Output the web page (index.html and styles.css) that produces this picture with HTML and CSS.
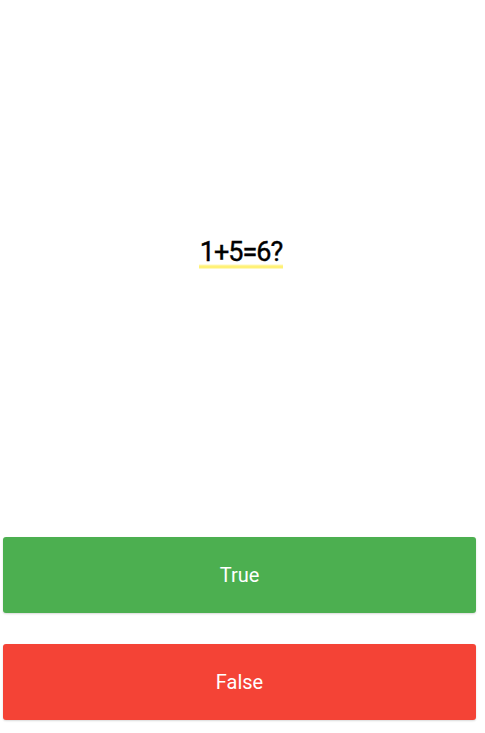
FILE: index.html
```html
<!DOCTYPE html>
<html>
<head>
<meta charset="utf-8">
<link rel="stylesheet" href="styles.css">
</head>
<body>
<div class="app">
  <div class="question"><span class="q-text">1+5=6?</span></div>
  <div class="answers">
    <button class="btn btn-true">True</button>
    <button class="btn btn-false">False</button>
  </div>
</div>
</body>
</html>
```
FILE: styles.css
```css
html, body {
  margin: 0;
  padding: 0;
  background: #ffffff;
  font-family: Roboto, "Noto Sans", sans-serif;
}
.app {
  height: 733px;
  display: flex;
  flex-direction: column;
  box-sizing: border-box;
  padding: 0 9px 13px 3px;
}
.question {
  padding-top: 236px;
  text-align: center;
  margin-left: 3px;
}
.q-text {
  font-size: 27px;
  font-weight: 400;
  letter-spacing: -1px;
  line-height: 33px;
  color: #000;
  -webkit-text-stroke: 0.4px #000;
  padding: 0 1px 1px;
  background: linear-gradient(to top, transparent 0, #fff176 1px, #fff176 3px, transparent 5px);
}
.answers {
  margin-top: auto;
  display: flex;
  flex-direction: column;
  gap: 31px;
}
.btn {
  display: block;
  width: 100%;
  height: 76px;
  border: none;
  border-radius: 3px;
  color: #fff;
  font-family: Roboto, "Noto Sans", sans-serif;
  font-size: 20px;
  box-shadow: 0 1px 2px rgba(0,0,0,0.15);
}
.btn-true { background: #4caf50; }
.btn-false { background: #f44336; }
```
